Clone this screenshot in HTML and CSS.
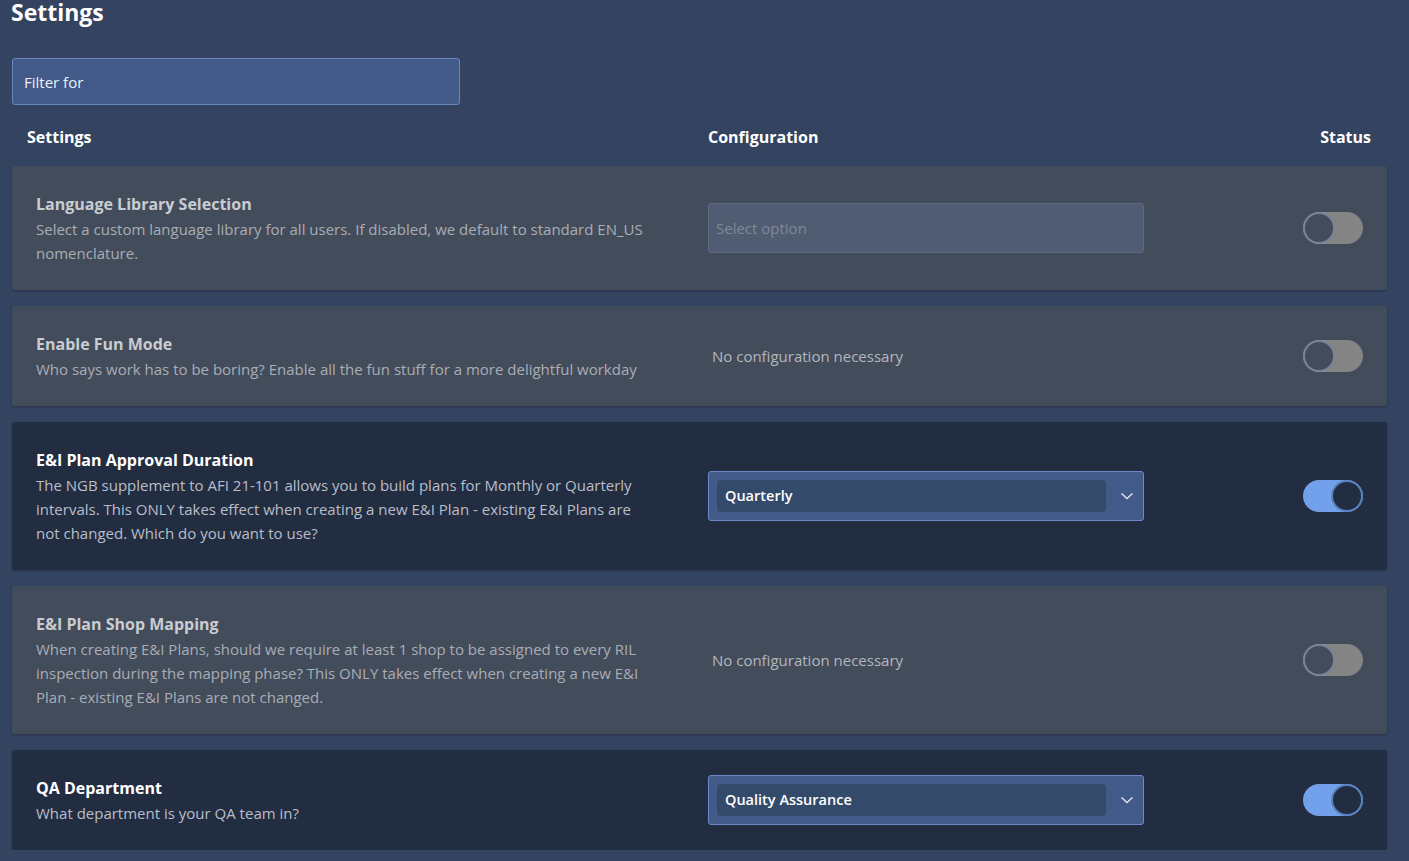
FILE: index.html
```html
<!DOCTYPE html>
<html lang="en">
  <head>
    <meta charset="UTF-8" />
    <meta name="viewport" content="width=device-width, initial-scale=1.0" />
    <title>Settings</title>
    <link rel="stylesheet" href="styles.css">
  </head>
  <body>
    <div class="page">
      <h1 class="page-title">Settings</h1>

      <input type="text" class="filter" placeholder="Filter for" />

      <div class="table-head">
        <span>Settings</span>
        <span>Configuration</span>
        <span class="head-status">Status</span>
      </div>

      <div class="setting disabled">
        <div class="info">
          <h3>Language Library Selection</h3>
          <p>Select a custom language library for all users. If disabled, we default to standard EN_US nomenclature.</p>
        </div>
        <div class="config">
          <div class="select-box empty">Select option</div>
        </div>
        <div class="status">
          <span class="toggle"></span>
        </div>
      </div>

      <div class="setting disabled">
        <div class="info">
          <h3>Enable Fun Mode</h3>
          <p>Who says work has to be boring? Enable all the fun stuff for a more delightful workday</p>
        </div>
        <div class="config">
          <span class="no-config">No configuration necessary</span>
        </div>
        <div class="status">
          <span class="toggle"></span>
        </div>
      </div>

      <div class="setting">
        <div class="info">
          <h3>E&amp;I Plan Approval Duration</h3>
          <p>The NGB supplement to AFI 21-101 allows you to build plans for Monthly or Quarterly intervals. This ONLY takes effect when creating a new E&amp;I Plan - existing E&amp;I Plans are not changed. Which do you want to use?</p>
        </div>
        <div class="config">
          <div class="select-box">
            <span class="select-value">Quarterly</span>
            <svg class="chevron" width="14" height="14" viewBox="0 0 14 14"><path d="M1.5 4.5 L7 9.5 L12.5 4.5" fill="none" stroke="#dfe4ee" stroke-width="1.4"/></svg>
          </div>
        </div>
        <div class="status">
          <span class="toggle on"></span>
        </div>
      </div>

      <div class="setting disabled">
        <div class="info">
          <h3>E&amp;I Plan Shop Mapping</h3>
          <p>When creating E&amp;I Plans, should we require at least 1 shop to be assigned to every RIL inspection during the mapping phase? This ONLY takes effect when creating a new E&amp;I Plan - existing E&amp;I Plans are not changed.</p>
        </div>
        <div class="config">
          <span class="no-config">No configuration necessary</span>
        </div>
        <div class="status">
          <span class="toggle"></span>
        </div>
      </div>

      <div class="setting">
        <div class="info">
          <h3>QA Department</h3>
          <p>What department is your QA team in?</p>
        </div>
        <div class="config">
          <div class="select-box">
            <span class="select-value">Quality Assurance</span>
            <svg class="chevron" width="14" height="14" viewBox="0 0 14 14"><path d="M1.5 4.5 L7 9.5 L12.5 4.5" fill="none" stroke="#dfe4ee" stroke-width="1.4"/></svg>
          </div>
        </div>
        <div class="status">
          <span class="toggle on"></span>
        </div>
      </div>
    </div>
  </body>
</html>
```

FILE: styles.css
```css
body {
  font-family: "Open Sans", "Noto Sans", sans-serif;
  margin: 0;
  padding: 0;
  background-color: #334360;
  color: #ffffff;
}
.page {
  padding: 0 22px 0 12px;
}
.page-title {
  margin: 0;
  font-size: 23px;
  line-height: 24px;
  font-weight: 700;
  margin-left: -1px;
}
.filter {
  display: block;
  box-sizing: border-box;
  width: 448px;
  height: 47px;
  margin-top: 34px;
  padding: 0 11px;
  font-family: inherit;
  font-size: 15px;
  color: #ffffff;
  background-color: #425a87;
  border: 1px solid #6a86bf;
  border-radius: 3px;
  outline: none;
}
.filter::placeholder {
  color: #eef1f7;
}
.table-head {
  display: grid;
  grid-template-columns: 681px 1fr auto;
  padding: 0 16px 0 15px;
  margin-top: 20px;
  font-size: 16px;
  font-weight: 700;
  line-height: 24px;
}
.setting {
  display: grid;
  grid-template-columns: 620px 436px 1fr;
  column-gap: 52px;
  align-items: center;
  margin-top: 16px;
  padding: 25px 24px;
  background-color: #222d42;
  border-radius: 3px;
  box-shadow: 0 1px 2px rgba(0, 0, 0, 0.25);
}
.table-head + .setting {
  margin-top: 17px;
}
.info h3 {
  margin: 0;
  font-size: 16px;
  line-height: 26px;
  font-weight: 700;
  color: #ffffff;
}
.info p {
  margin: 0;
  font-size: 15px;
  line-height: 24px;
  color: #b9bec8;
}
.setting.disabled {
  background-color: #434c5b;
}
.setting.disabled h3 {
  color: #c9ccd2;
}
.setting.disabled p {
  color: #a9adb5;
}
.no-config {
  font-size: 15px;
  color: #b3b7be;
  padding-left: 4px;
}
.select-box {
  box-sizing: border-box;
  height: 50px;
  display: flex;
  align-items: center;
  padding: 0 8px;
  background-color: #425a87;
  border: 1px solid #6c8bc6;
  border-radius: 3px;
}
.select-box.empty {
  background-color: #505c72;
  border-color: #5d6a84;
  color: #7f8899;
  font-size: 15px;
  padding: 0 7px;
}
.select-value {
  flex: 1;
  height: 32px;
  line-height: 32px;
  padding: 0 8px;
  background-color: #344a6b;
  border-radius: 4px;
  font-size: 14.5px;
  font-weight: 600;
  color: #ffffff;
}
.chevron {
  margin: 0 1px 0 14px;
}
.status {
  display: flex;
  justify-content: flex-end;
}
.toggle {
  position: relative;
  display: inline-block;
  width: 60px;
  height: 32px;
  border-radius: 16px;
  background-color: #848484;
}
.toggle::after {
  content: "";
  position: absolute;
  top: 0;
  left: 0;
  box-sizing: border-box;
  width: 32px;
  height: 32px;
  border-radius: 50%;
  background-color: #434c5b;
  border: 2px solid #7a8397;
}
.toggle.on {
  background-color: #72a0ea;
}
.toggle.on::after {
  left: auto;
  right: 0;
  background-color: #222d42;
  border-color: #5a80c4;
}
```
